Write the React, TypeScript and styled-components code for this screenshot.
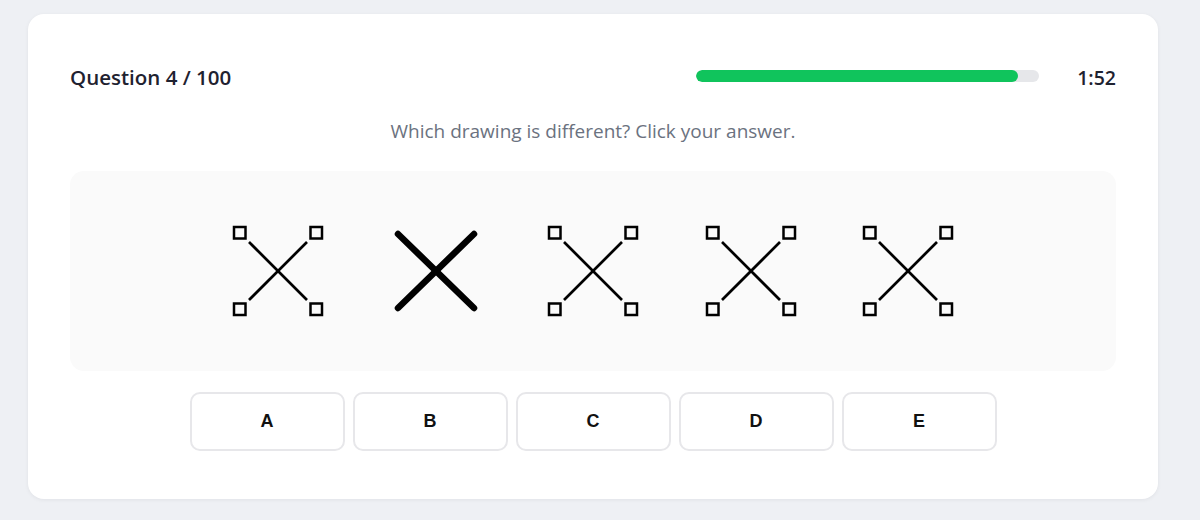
import React from "react";
import styled, { createGlobalStyle } from "styled-components";

const Global = createGlobalStyle`
  html, body { margin: 0; padding: 0; background: #eef0f4; }
  body { font-family: "Open Sans", "Noto Sans", sans-serif; }
`;

const Page = styled.div`
  width: 1200px;
  height: 520px;
  box-sizing: border-box;
  padding: 14px 42px 0 28px;
`;

const Card = styled.div`
  background: #ffffff;
  border-radius: 16px;
  box-shadow: 0 1px 4px rgba(15, 23, 42, 0.06);
  padding: 41px 42px 48px 42px;
  display: flex;
  flex-direction: column;
`;

const Header = styled.div`
  display: flex;
  align-items: center;
  justify-content: space-between;
  height: 44px;
`;

const Title = styled.div`
  font-size: 20.5px;
  font-weight: 600;
  color: #1f2230;
`;

const Right = styled.div`
  display: flex;
  align-items: center;
  gap: 38px;
`;

const Track = styled.div`
  width: 343px;
  height: 12px;
  border-radius: 6px;
  background: #e6e7ea;
  overflow: hidden;
  margin-top: -3px;
`;

const Fill = styled.div`
  height: 100%;
  border-radius: 6px;
  background: #10c45c;
`;

const Time = styled.div`
  font-size: 19.5px;
  font-weight: 600;
  color: #1f2230;
`;

const Prompt = styled.div`
  text-align: center;
  font-size: 19px;
  color: #6b7280;
  margin-top: 20px;
  line-height: 24px;
`;

const Panel = styled.div`
  margin-top: 28px;
  height: 200px;
  background: #fafafa;
  border-radius: 14px;
  display: flex;
  align-items: center;
  justify-content: center;
  gap: 61.5px;
`;

const Choices = styled.div`
  margin-top: 21px;
  display: flex;
  justify-content: center;
  gap: 8px;
`;

const Choice = styled.button`
  width: 155px;
  height: 59px;
  background: #ffffff;
  border: 2px solid #e7e7ea;
  border-radius: 10px;
  font-family: "Liberation Sans", Arial, sans-serif;
  font-weight: 700;
  font-size: 18px;
  color: #111;
  cursor: pointer;
  padding: 0;
`;

const Figure: React.FC<{ plain?: boolean }> = ({ plain }) => (
  <svg width="96" height="96" viewBox="-48 -48 96 96">
    {plain ? (
      <g stroke="#000" strokeWidth="6.5" strokeLinecap="round">
        <line x1="-38" y1="-37" x2="38" y2="37" />
        <line x1="38" y1="-37" x2="-38" y2="37" />
      </g>
    ) : (
      <g stroke="#000" fill="none">
        <g strokeWidth="2.7">
          <line x1="-29" y1="-29" x2="29" y2="29" />
          <line x1="29" y1="-29" x2="-29" y2="29" />
        </g>
        <g strokeWidth="2.5">
          <rect x="-44" y="-44" width="11.5" height="11.5" />
          <rect x="32.5" y="-44" width="11.5" height="11.5" />
          <rect x="-44" y="32.5" width="11.5" height="11.5" />
          <rect x="32.5" y="32.5" width="11.5" height="11.5" />
        </g>
      </g>
    )}
  </svg>
);

const figures = [false, true, false, false, false];
const letters = ["A", "B", "C", "D", "E"];

export default function App() {
  return (
    <>
      <Global />
      <Page>
        <Card>
          <Header>
            <Title>Question 4 / 100</Title>
            <Right>
              <Track>
                <Fill style={{ width: `${(322 / 343) * 100}%` }} />
              </Track>
              <Time>1:52</Time>
            </Right>
          </Header>
          <Prompt>Which drawing is different? Click your answer.</Prompt>
          <Panel>
            {figures.map((p, i) => (
              <Figure key={i} plain={p} />
            ))}
          </Panel>
          <Choices>
            {letters.map((l) => (
              <Choice key={l}>{l}</Choice>
            ))}
          </Choices>
        </Card>
      </Page>
    </>
  );
}
